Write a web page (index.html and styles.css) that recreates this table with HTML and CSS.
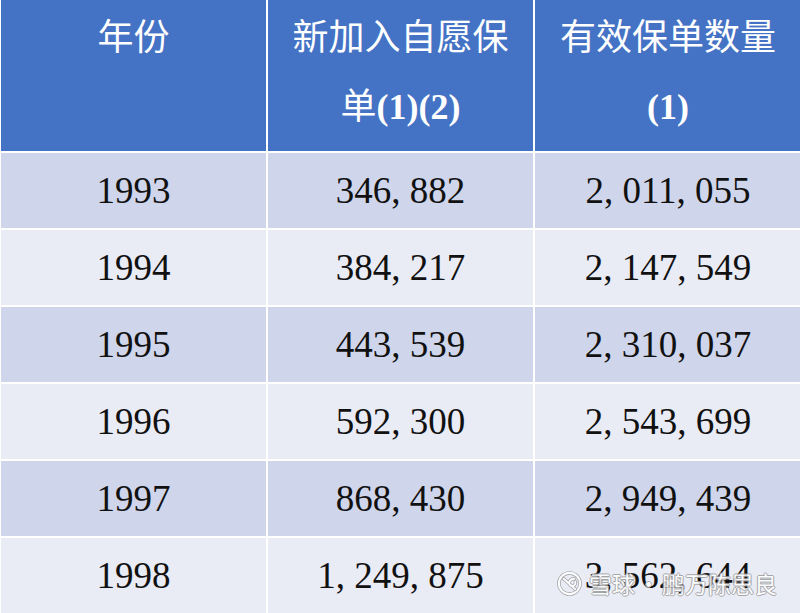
FILE: index.html
```html
<!DOCTYPE html>
<html lang="zh">
<head>
<meta charset="utf-8">
<link rel="stylesheet" href="styles.css">
</head>
<body>
<div class="page">
  <div class="table">
    <div class="cell head">年份</div>
    <div class="cell head">新加入自愿保<br>单<b class="paren">(1)(2)</b></div>
    <div class="cell head">有效保单数量<br><b class="paren">(1)</b></div>

    <div class="cell odd">1993</div><div class="cell odd">346, 882</div><div class="cell odd">2, 011, 055</div>
    <div class="cell even">1994</div><div class="cell even">384, 217</div><div class="cell even">2, 147, 549</div>
    <div class="cell odd">1995</div><div class="cell odd">443, 539</div><div class="cell odd">2, 310, 037</div>
    <div class="cell even">1996</div><div class="cell even">592, 300</div><div class="cell even">2, 543, 699</div>
    <div class="cell odd">1997</div><div class="cell odd">868, 430</div><div class="cell odd">2, 949, 439</div>
    <div class="cell even">1998</div><div class="cell even">1, 249, 875</div><div class="cell even">3, 562, 644</div>
  </div>
  <div class="watermark">
    <svg class="wm-logo" viewBox="0 0 26 26" width="25" height="25">
      <circle cx="13" cy="13" r="11" fill="none" stroke="#8f8f8f" stroke-width="3.6"/>
      <circle cx="13" cy="13" r="11" fill="none" stroke="#ffffff" stroke-width="2.2"/>
      <path d="M7 8 L19 19 M18 8 C13 8 11 13 14 15 C17 17 20 14 19 11" fill="none" stroke="#8f8f8f" stroke-width="3.4" stroke-linecap="round"/>
      <path d="M7 8 L19 19 M18 8 C13 8 11 13 14 15 C17 17 20 14 19 11" fill="none" stroke="#ffffff" stroke-width="2" stroke-linecap="round"/>
    </svg>
    <span class="wm-text">雪球</span><span class="wm-dot">·</span><span class="wm-text">鹏万陈思良</span>
  </div>
</div>
</body>
</html>
```

FILE: styles.css
```css
html, body {
  margin: 0;
  padding: 0;
  background: #ffffff;
}
.page {
  position: relative;
  width: 800px;
  height: 613px;
  overflow: hidden;
  background: #ffffff;
}
.table {
  display: grid;
  grid-template-columns: 265px 265px 266px;
  grid-template-rows: 151px repeat(6, 75px);
  column-gap: 2px;
  row-gap: 2px;
  padding-left: 1px;
}
.cell {
  display: flex;
  align-items: center;
  justify-content: center;
  font-family: "Liberation Serif", "Times New Roman", serif;
  font-size: 37px;
  color: #111111;
  white-space: pre;
}
.head {
  display: block;
  background: #4472c4;
  color: #ffffff;
  text-align: center;
  padding-top: 0;
  font-family: "Noto Sans CJK SC", "Noto Sans", sans-serif;
  font-size: 36px;
  font-weight: 400;
  line-height: 69px;
  white-space: normal;
}
.paren {
  font-family: "Liberation Serif", "Times New Roman", serif;
  font-weight: 700;
  font-size: 36px;
}
.odd {
  background: #cfd5ea;
}
.even {
  background: #e9ebf5;
}
.watermark {
  position: absolute;
  left: 557px;
  top: 568px;
  display: flex;
  align-items: center;
  gap: 2px;
  opacity: 0.85;
}
.wm-logo {
  margin-right: 5px;
}
.wm-text, .wm-dot {
  font-family: "Noto Sans CJK SC", sans-serif;
  font-size: 23px;
  line-height: 30px;
  color: #ffffff;
  text-shadow: 1px 0 0 #9a9a9a, -1px 0 0 #9a9a9a, 0 1px 0 #9a9a9a, 0 -1px 0 #9a9a9a;
}
.wm-dot {
  margin: 0;
}
```
